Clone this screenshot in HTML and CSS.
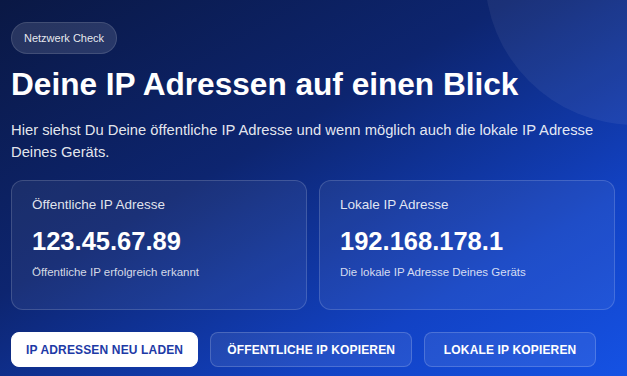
FILE: index.html
```html
<!DOCTYPE html>
<html lang="de">
<head>
  <meta charset="UTF-8">
  <meta name="viewport" content="width=device-width, initial-scale=1.0">
  <title>Netzwerk Check</title>
  <link rel="stylesheet" href="styles.css">
</head>
<body>
  <main class="hero">
    <div class="hero-circle"></div>
    <span class="badge">Netzwerk Check</span>
    <h1>Deine IP Adressen auf einen Blick</h1>
    <p class="intro">Hier siehst Du Deine öffentliche IP Adresse und wenn möglich auch die lokale IP Adresse Deines Geräts.</p>

    <div class="cards">
      <div class="card">
        <p class="card-label">Öffentliche IP Adresse</p>
        <p class="card-value">123.45.67.89</p>
        <p class="card-note">Öffentliche IP erfolgreich erkannt</p>
      </div>
      <div class="card">
        <p class="card-label">Lokale IP Adresse</p>
        <p class="card-value">192.168.178.1</p>
        <p class="card-note">Die lokale IP Adresse Deines Geräts</p>
      </div>
    </div>

    <div class="actions">
      <button type="button" class="btn btn-primary">IP Adressen neu laden</button>
      <button type="button" class="btn">Öffentliche IP kopieren</button>
      <button type="button" class="btn">Lokale IP kopieren</button>
    </div>
  </main>
</body>
</html>
```

FILE: styles.css
```css
* {
  box-sizing: border-box;
}

body {
  margin: 0;
  height: 376px;
  overflow: hidden;
  font-family: "Liberation Sans", Arial, sans-serif;
  color: #fff;
  background: linear-gradient(150deg, #0a1844 0%, #0d2570 40%, #1242c4 75%, #1552e4 100%);
}

.hero {
  position: relative;
  padding: 22px 12px 0 11px;
  height: 376px;
  overflow: hidden;
}

.hero-circle {
  position: absolute;
  left: 485px;
  top: -175px;
  width: 300px;
  height: 300px;
  border-radius: 50%;
  background: rgba(255, 255, 255, 0.06);
  pointer-events: none;
}

.badge {
  position: relative;
  display: inline-flex;
  align-items: center;
  height: 32px;
  padding: 0 12px;
  border-radius: 16px;
  font-size: 11px;
  color: rgba(255, 255, 255, 0.9);
  background: rgba(255, 255, 255, 0.12);
  border: 1px solid rgba(255, 255, 255, 0.12);
}

h1 {
  position: relative;
  margin: 12px 0 0;
  font-size: 31.6px;
  line-height: 36px;
  font-weight: 700;
}

.intro {
  position: relative;
  margin: 17px 0 0;
  font-size: 14.75px;
  line-height: 22px;
  color: rgba(255, 255, 255, 0.9);
}

.cards {
  position: relative;
  display: grid;
  grid-template-columns: 1fr 1fr;
  gap: 12px;
  margin-top: 17px;
}

.card {
  height: 130px;
  padding: 15px 20px 0;
  border-radius: 12px;
  background: rgba(255, 255, 255, 0.06);
  border: 1px solid rgba(255, 255, 255, 0.16);
}

.card p {
  margin: 0;
}

.card-label {
  font-size: 13.5px;
  line-height: 18px;
  color: rgba(255, 255, 255, 0.88);
}

.card-value {
  margin-top: 12px !important;
  font-size: 25.5px;
  line-height: 30px;
  font-weight: 700;
}

.card-note {
  margin-top: 8px !important;
  font-size: 11.5px;
  line-height: 16px;
  color: rgba(255, 255, 255, 0.82);
}

.actions {
  position: relative;
  display: flex;
  gap: 12px;
  margin-top: 22px;
}

.btn {
  min-width: 172px;
  height: 35px;
  padding: 0 16px;
  border-radius: 8px;
  font-family: inherit;
  font-size: 12px;
  font-weight: 700;
  letter-spacing: 0.15px;
  text-transform: uppercase;
  color: #fff;
  background: rgba(255, 255, 255, 0.08);
  border: 1px solid rgba(255, 255, 255, 0.18);
  cursor: pointer;
}

.btn-primary {
  padding: 0 14px;
  color: #1d3aa6;
  background: #fff;
  border-color: #fff;
}
```
